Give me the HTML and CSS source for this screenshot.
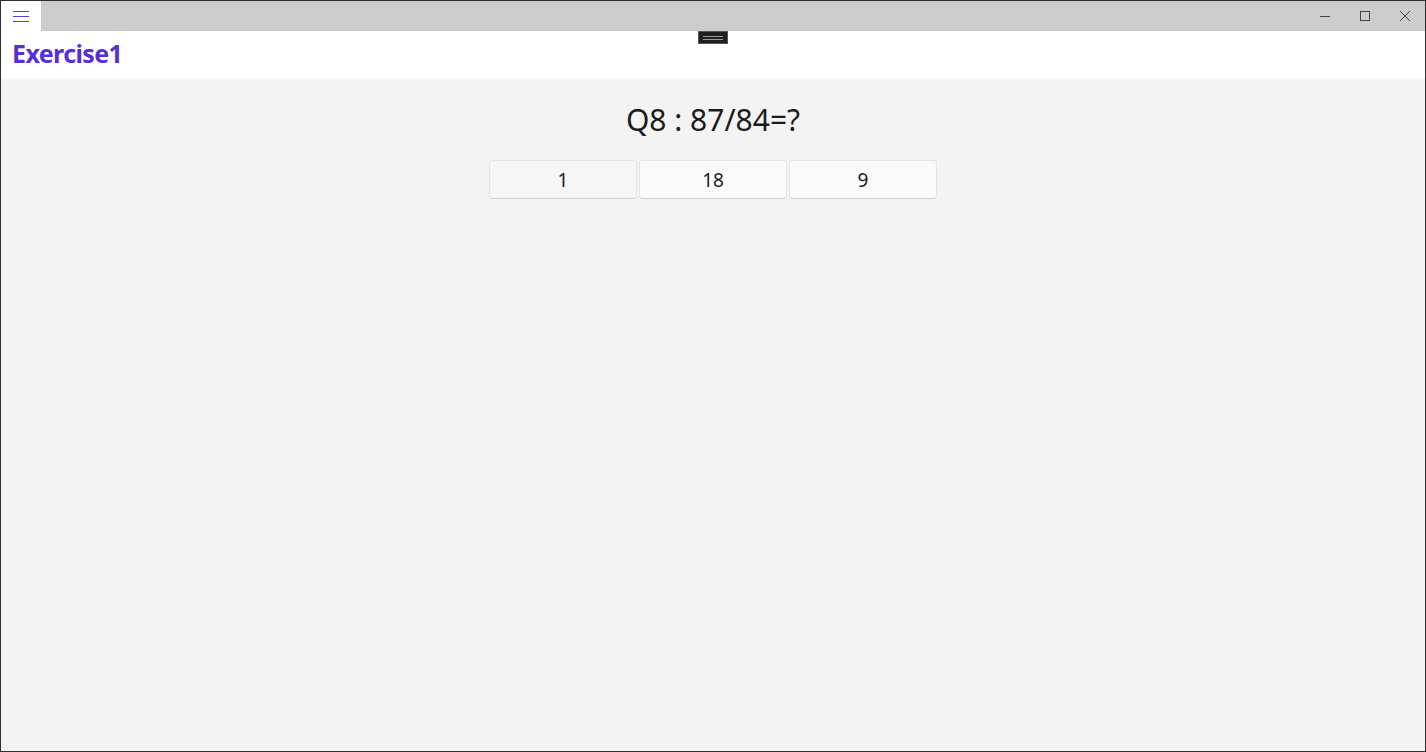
FILE: index.html
```html
<!DOCTYPE html>
<html lang="en">
<head>
<meta charset="utf-8">
<title>Exercise1</title>
<link rel="stylesheet" href="styles.css">
</head>
<body>
<div class="window">
  <div class="titlebar">
    <div class="menu-btn">
      <svg width="16" height="12" viewBox="0 0 16 12"><path d="M0 1.5H16M0 6.5H16M0 11.5H16" stroke="#5b3ce0" stroke-width="1.2"/></svg>
    </div>
    <div class="drag"></div>
    <div class="caption">
      <div class="cap-btn"><svg width="10" height="10" viewBox="0 0 10 10"><path d="M0 5.5H10" stroke="#444" stroke-width="1"/></svg></div>
      <div class="cap-btn"><svg width="10" height="10" viewBox="0 0 10 10"><rect x="0.5" y="0.5" width="9" height="9" fill="none" stroke="#444" stroke-width="1"/></svg></div>
      <div class="cap-btn"><svg width="10" height="10" viewBox="0 0 10 10"><path d="M0 0L10 10M10 0L0 10" stroke="#444" stroke-width="1"/></svg></div>
    </div>
  </div>
  <div class="header">
    <h1 class="app-title">Exercise1</h1>
    <div class="handle"><span></span><span></span></div>
  </div>
  <main class="content">
    <div class="question">Q8 : 87/84=?</div>
    <div class="answers">
      <button class="answer answer-first">1</button>
      <button class="answer">18</button>
      <button class="answer">9</button>
    </div>
  </main>
</div>
</body>
</html>
```

FILE: styles.css
```css
html, body {
  margin: 0;
  padding: 0;
  height: 100%;
}
body {
  font-family: "Noto Sans", "Open Sans", sans-serif;
  background: #f3f3f3;
}
.window {
  box-sizing: border-box;
  height: 752px;
  width: 1426px;
  border: 1px solid #2e2e2e;
  display: flex;
  flex-direction: column;
  background: #f3f3f3;
}
.titlebar {
  height: 30px;
  background: #cccccc;
  display: flex;
  align-items: stretch;
}
.menu-btn {
  width: 40px;
  background: #ffffff;
  display: flex;
  align-items: center;
  justify-content: center;
}
.drag {
  flex: 1;
}
.caption {
  display: flex;
}
.cap-btn {
  width: 40px;
  display: flex;
  align-items: center;
  justify-content: center;
}
.header {
  height: 48px;
  background: #ffffff;
  display: flex;
  align-items: center;
  position: relative;
}
.app-title {
  margin: 0 0 4px 11px;
  font-size: 25px;
  font-weight: 700;
  color: #5530d6;
  letter-spacing: -0.6px;
}
.handle {
  position: absolute;
  left: 697px;
  top: 0;
  width: 28px;
  height: 11px;
  background: #202020;
  border: 1px solid #555;
  display: flex;
  flex-direction: column;
  justify-content: center;
  align-items: center;
  gap: 2px;
}
.handle span {
  display: block;
  width: 20px;
  height: 1px;
  background: #9a9a9a;
}
.content {
  flex: 1;
  display: flex;
  flex-direction: column;
  align-items: center;
  padding-top: 21px;
}
.question {
  font-size: 30px;
  color: #1b1b1b;
  line-height: 40px;
}
.answers {
  display: flex;
  gap: 2px;
  margin-top: 20px;
}
.answer {
  width: 148px;
  height: 39px;
  box-sizing: border-box;
  background: #fbfbfb;
  border: 1px solid #e5e5e5;
  border-bottom-color: #cfcfcf;
  border-radius: 4px;
  font-family: "Noto Sans", "Open Sans", sans-serif;
  font-size: 19px;
  color: #1b1b1b;
  padding: 0;
}
.answer-first {
  background: #f6f6f6;
}
```
